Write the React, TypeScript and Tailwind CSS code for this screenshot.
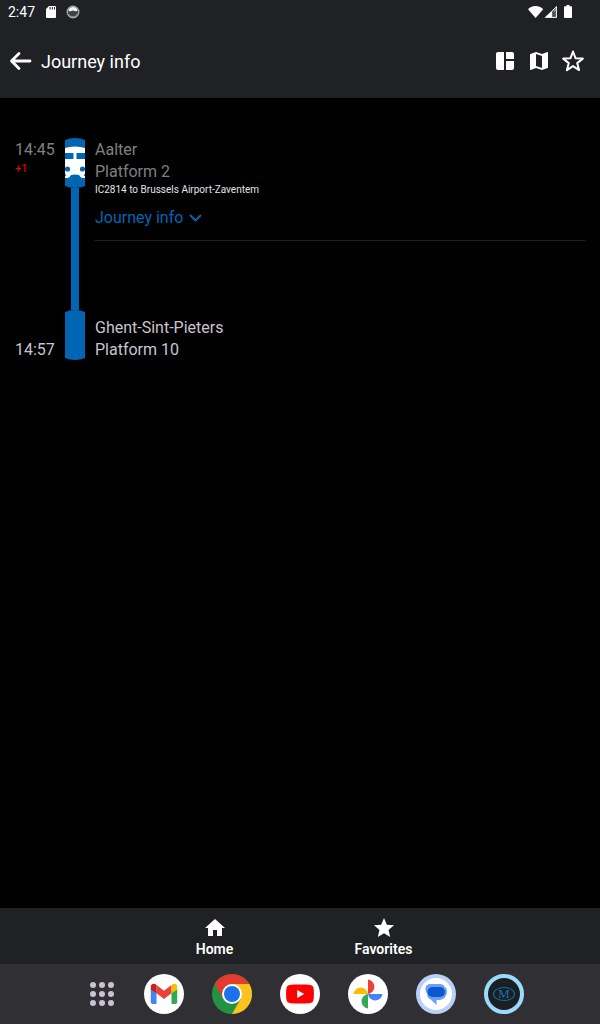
import type { ReactNode } from "react";
import { MdHome, MdMap, MdSpaceDashboard, MdStar } from "react-icons/md";

const BLUE = "#0066b3";

function StatusBar() {
  return (
    <div className="flex h-6 items-center justify-between pl-2 pr-7 text-white">
      <div className="flex items-center">
        <span className="w-[38px] text-[14px] leading-6">2:47</span>
        <svg width="10" height="12" viewBox="0 0 10 12" aria-hidden="true">
          <path d="M3 0h6a1 1 0 0 1 1 1v10a1 1 0 0 1-1 1H1a1 1 0 0 1-1-1V3z" fill="#fff" />
          <path d="M3.600 1h1v2.500h-1zM5.800 1h1v2.500h-1zM8 1h1v2.500H8z" fill="#202124" />
        </svg>
        <svg className="ml-2.5" width="14" height="14" viewBox="0 0 14 14" aria-hidden="true">
          <circle cx="7" cy="7" r="5.800" fill="#3f4143" stroke="#a4a5a6" strokeWidth="1.400" />
          <path d="M2.400 5C3.300 3 5 2 7 2s3.700 1 4.600 3L10.500 6.500 7 5.500 3.500 6.500z" fill="#f4f4f4" />
          <path d="M2.500 9c1 2 2.800 2.800 4.500 2.800S10.500 11 11.500 9" fill="none" stroke="#97999b" />
        </svg>
      </div>
      <div className="flex items-center">
        <svg width="16" height="14" viewBox="0 0 16 14" aria-hidden="true">
          <path d="M0 4.200C2.200 2.100 4.900 1 7.600 1s5.400 1.100 7.600 3.200L7.600 13z" fill="#fff" />
        </svg>
        <svg className="mr-1.5" width="14" height="14" viewBox="0 0 14 14" aria-hidden="true">
          <path d="M12.500 1.500v11h-11z" fill="#86888a" />
          <path d="M8 5.800v6.700H.5z" fill="#fff" />
          <path d="M12.500 1.500v11h-11z" fill="none" stroke="#e4e4e4" />
          <path d="M8.500 6.500h3v5h-3z" fill="#4a4c4e" />
        </svg>
        <svg width="8" height="14" viewBox="0 0 8 14" aria-hidden="true">
          <path d="M2.500 0h3v1.300H7a1 1 0 0 1 1 1V12a1 1 0 0 1-1 1H1a1 1 0 0 1-1-1V2.300a1 1 0 0 1 1-1h1.500z" fill="#fff" />
        </svg>
      </div>
    </div>
  );
}

function Header() {
  return (
    <header className="bg-[#202124]">
      <StatusBar />
      <div className="flex h-[74px] items-center px-[9px] text-white">
        <button type="button" aria-label="Back" className="mr-2">
          <svg width="24" height="24" viewBox="0 0 24 24" aria-hidden="true">
            <path
              d="M10 4.500 2.500 12l7.500 7.500M3 12h18"
              fill="none"
              stroke="#fff"
              strokeWidth="2.800"
              strokeLinecap="round"
              strokeLinejoin="round"
            />
          </svg>
        </button>
        <h1 className="flex-1 pt-0.5 text-[18px] leading-6">Journey info</h1>
        <div className="flex gap-2.5 pr-1.5">
          <button type="button" aria-label="Dashboard">
            <MdSpaceDashboard size={24} />
          </button>
          <button type="button" aria-label="Map">
            <MdMap size={24} />
          </button>
          <button type="button" aria-label="Add to favorites">
            <svg width="24" height="24" viewBox="0 0 24 24" aria-hidden="true">
              <path
                d="M12 2.500l2.600 6.800 7.200.3-5.600 4.500 1.900 7L12 17.100 5.900 21.100l1.900-7L2.200 9.600l7.200-.3z"
                fill="none"
                stroke="#fff"
                strokeWidth="2"
                strokeLinejoin="round"
              />
            </svg>
          </button>
        </div>
      </div>
    </header>
  );
}

function Stop({ train = false }: { train?: boolean }) {
  return (
    <svg width="20" height="50" viewBox="0 0 20 50" aria-hidden="true">
      <path d="M0 2Q4 0 10 0t10 2v46q-4 2-10 2T0 48z" fill={BLUE} />
      {train && (
        <g>
          <path d="M0 10q4-1.500 10-1.500T20 10v30H0z" fill="#fff" />
          <path d="M0 15h8.500v6H0zM11.500 15H20v6h-8.500z" fill={BLUE} />
          <circle cx="2.500" cy="31" r="2.600" fill={BLUE} />
          <circle cx="17.500" cy="31" r="2.600" fill={BLUE} />
          <path d="M0 36l1.500 1L0 38.200zM20 36l-1.500 1 1.500 1.200z" fill={BLUE} />
          <path d="M6 37q4-1.200 8 0l1.500 2 1.500 1v1H3v-1l1.500-1z" fill={BLUE} />
        </g>
      )}
    </svg>
  );
}

function Journey() {
  return (
    <main className="flex-1 px-[15px] pt-10">
      <div className="flex text-[16px] leading-[22px]">
        <div className="flex w-[50px] flex-col justify-between pt-px">
          <div className="text-[#808080]">
            <div>14:45</div>
            <div className="text-[11px] leading-4 text-[#ff0000]">+1</div>
          </div>
          <div className="text-[#cac4d0]">14:57</div>
        </div>
        <div className="mb-px mr-2.5 flex flex-col items-center">
          <Stop train />
          <div className="w-2 flex-1 bg-[#0066b3]" />
          <Stop />
        </div>
        <div className="flex-1 pt-px">
          <section className="border-b border-[#222222] pb-[11px] text-[#808080]">
            <h2>Aalter</h2>
            <p>Platform 2</p>
            <p className="text-[10px] leading-[14px] text-[#e6e0e9]">IC2814 to Brussels Airport-Zaventem</p>
            <button type="button" className="mt-2.5 flex items-center gap-1 text-[#0066b3]">
              Journey info
              <svg width="16" height="16" viewBox="0 0 16 16" aria-hidden="true">
                <path
                  d="M3.500 5.500 8.500 10.500l5-5"
                  fill="none"
                  stroke={BLUE}
                  strokeWidth="1.900"
                  strokeLinecap="round"
                  strokeLinejoin="round"
                />
              </svg>
            </button>
          </section>
          <section className="pt-[76px] text-[#cac4d0]">
            <h2>Ghent-Sint-Pieters</h2>
            <p>Platform 10</p>
          </section>
        </div>
      </div>
    </main>
  );
}

function BottomNav() {
  return (
    <nav className="flex h-14 justify-center bg-[#202124] pr-0.5 text-[14px] font-semibold leading-4 text-white">
      <a href="#home" className="flex w-[169px] flex-col items-center pt-2">
        <MdHome size={24} />
        <span className="mt-px">Home</span>
      </a>
      <a href="#favorites" className="flex w-[169px] flex-col items-center pt-2">
        <MdStar size={24} />
        <span className="mt-px">Favorites</span>
      </a>
    </nav>
  );
}

function AppIcon({ label, children }: { label: string; children: ReactNode }) {
  return (
    <button type="button" aria-label={label}>
      <svg width="40" height="40" viewBox="0 0 40 40" aria-hidden="true">
        {children}
      </svg>
    </button>
  );
}

const dots = [3, 12, 21];

function Taskbar() {
  return (
    <footer className="flex h-[60px] items-center justify-center gap-7 bg-[#303034]">
      <button type="button" aria-label="All apps" className="flex w-10 justify-end pr-0.5">
        <svg width="24" height="24" viewBox="0 0 24 24" aria-hidden="true">
          {dots.map((y) => dots.map((x) => <circle key={`${x}-${y}`} cx={x} cy={y} r="3" fill="#c8c2d2" />))}
        </svg>
      </button>
      <AppIcon label="Gmail">
        <circle cx="20" cy="20" r="20" fill="#fff" />
        <path d="M6.800 15v13.300q0 1.700 1.700 1.700h4V17z" fill="#4285f4" />
        <path d="M33.200 15v13.300q0 1.700-1.700 1.700h-4V17z" fill="#34a853" />
        <path d="M12.500 11 20 16.800 27.500 11v8.300L20 25l-7.500-5.700z" fill="#ea4335" />
        <path d="M6.800 15.500v-2.700c0-3 3.200-4.200 5.700-1.800v8.300z" fill="#c5221f" />
        <path d="M33.200 15.500v-2.700c0-3-3.200-4.200-5.700-1.800v8.300z" fill="#fbbc04" />
      </AppIcon>
      <AppIcon label="Chrome">
        <circle cx="20" cy="20" r="20" fill="#229342" />
        <path d="M20 10h17.320A20 20 0 0 1 20 40l8.660-15z" fill="#fcc31e" />
        <path d="M2.680 10A20 20 0 0 1 37.320 10H20L11.340 25z" fill="#e33b2e" />
        <circle cx="20" cy="20" r="10" fill="#fff" />
        <circle cx="20" cy="20" r="8" fill="#1a73e8" />
      </AppIcon>
      <AppIcon label="YouTube">
        <circle cx="20" cy="20" r="20" fill="#fff" />
        <path
          d="M20 10.500c4 0 8 .1 10.500.6 1.700.4 2.700 1.400 3 3 .6 3.500.6 8.300 0 11.800-.3 1.600-1.300 2.600-3 3-4 .8-17 .8-21 0-1.700-.4-2.700-1.400-3-3-.6-3.500-.6-8.300 0-11.800.3-1.600 1.300-2.600 3-3 2.500-.5 6.500-.6 10.500-.6z"
          fill="#ff0000"
        />
        <path d="M17.200 16v8l7-4z" fill="#fff" />
      </AppIcon>
      <AppIcon label="Photos">
        <circle cx="20" cy="20" r="20" fill="#fff" />
        <path d="M20 5.500a7.300 7.300 0 0 1 0 14.500z" fill="#ea4335" />
        <path d="M34.500 20a7.300 7.300 0 0 1-14.500 0z" fill="#4285f4" />
        <path d="M20 34.500a7.300 7.300 0 0 1 0-14.500z" fill="#34a853" />
        <path d="M5.500 20a7.300 7.300 0 0 1 14.500 0z" fill="#fbbc04" />
      </AppIcon>
      <AppIcon label="Messages">
        <circle cx="20" cy="20" r="20" fill="#b9d0fb" />
        <circle cx="20" cy="20" r="16" fill="#fff" />
        <path
          d="M14.500 10h9.500c2 0 3.700 1 4.500 2.700 3.300 1.800 3 6.300 1.300 9-1.500 3-4 4.300-7 4.300h-2.300v5L15 25.700c-2.500-1-4-3.200-3.800-6C8 16 9 10 14.500 10z"
          fill="#6d9ff8"
        />
        <rect x="11.500" y="13" width="17.500" height="10" rx="5" fill="#0b57d0" />
      </AppIcon>
      <AppIcon label="Rail journeys">
        <circle cx="20" cy="20" r="18" fill="#1c1f21" stroke="#9cdafc" strokeWidth="4" />
        <ellipse cx="20" cy="20" rx="10.500" ry="6.500" fill="none" stroke="#0c6aa8" strokeWidth="1.100" />
        <text x="20" y="24" textAnchor="middle" fontSize="13" className="font-['Liberation_Serif',serif]" fill="#0f74b8">
          M
        </text>
      </AppIcon>
    </footer>
  );
}

export default function App() {
  return (
    <div className="flex min-h-screen flex-col bg-black font-[Roboto,sans-serif]">
      <Header />
      <Journey />
      <BottomNav />
      <Taskbar />
    </div>
  );
}
